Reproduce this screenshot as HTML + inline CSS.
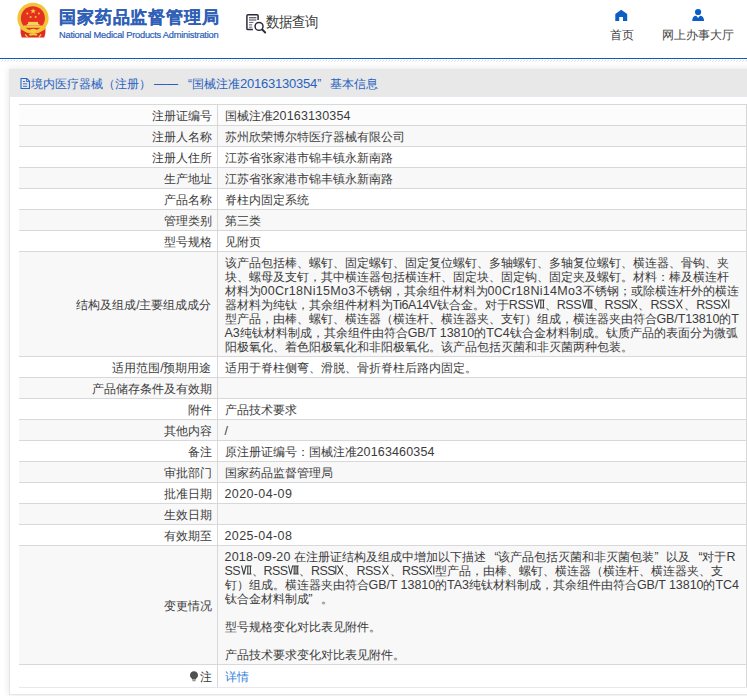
<!DOCTYPE html>
<html><head><meta charset="utf-8">
<style>
*{margin:0;padding:0;box-sizing:border-box}
html,body{width:747px;height:696px;overflow:hidden;background:#fff}
body{font-family:"Liberation Sans",sans-serif;color:#333;position:relative}
i{font-style:normal}
.hdr{position:absolute;left:0;top:0;width:747px;height:58px}
.emb{position:absolute;left:0;top:0}
.t1{position:absolute;left:59px;top:6px;font-size:16.5px;font-weight:bold;color:#2f5fb6;line-height:22px;white-space:nowrap;letter-spacing:0.85px;-webkit-text-stroke:0.2px #2f5fb6}
.t2{position:absolute;left:59px;top:30px;font-size:9.3px;color:#2a5db8;line-height:11px;white-space:nowrap;letter-spacing:-0.24px;-webkit-text-stroke:0.2px #2c5cb4}
.sq{position:absolute;left:242px;top:10px}
.sqt{position:absolute;left:266px;top:14px;font-size:13px;color:#3a3a3a;line-height:18px;white-space:nowrap;transform:scaleY(1.12);transform-origin:0 50%}
.nav{position:absolute;top:0;color:#444;font-size:12px;line-height:14px;text-align:center;white-space:nowrap}
.bl{position:absolute;left:0;top:58px;width:747px;height:1px;background:#0c5bc0}
.hatch{position:absolute;left:0;top:59px;width:747px;height:3px;background:repeating-linear-gradient(90deg,#fff 0 1px,#dedede 1px 2px,#fff 2px 3px)}
.panel{position:absolute;left:9px;top:69px;width:760px;height:626px;background:#fff;border:1px solid #e6e6e6;border-top:0;box-shadow:0 0 7px rgba(0,0,0,.11)}
.ph{position:absolute;left:-1px;top:0;width:100%;height:28px;background:#e8e8e8;border-bottom:1px solid #e3eaf2}
.pht{position:absolute;left:22px;top:7px;font-size:12px;line-height:16px;color:#2762c0;white-space:nowrap}
.pht svg.di{position:absolute;left:-11px;top:1px}
.pht .e{font-size:13px;letter-spacing:-0.22px}
table{position:absolute;left:9px;top:35px;width:728px;border-collapse:collapse;table-layout:fixed;font-size:12px;line-height:14px;color:#3c3c3c}
td{border-top:1px solid #d8d8d8;padding:4px 6px 2px 7px;vertical-align:middle}
td.l{width:198px;text-align:right;padding-right:5px;border-right:1px solid #d8d8d8}
td.v{border-right:1px solid #d8d8d8;white-space:nowrap}
tr.g td{background:#f8f8f8}
tr.f td{background:#fcfcfc}
tr.last td{border-bottom:1px solid #e6e8f0;padding-top:5px;padding-bottom:3px}
.e{font-size:12.5px;line-height:12px}
.v .e{letter-spacing:.15px}
.ln .e{letter-spacing:var(--ls)}
.v .dt{letter-spacing:.38px}

.q1,.q2{display:inline-block;width:12px}
.q1{text-align:right}
.bulb{vertical-align:-1px;margin-right:1px}
a{color:#2f7ee0;text-decoration:none}

.rn{vertical-align:0;margin:0 0 0 0.5px}

</style></head><body>
<div class="hdr">
  <svg class="emb" width="60" height="42" viewBox="0 0 60 42">
    <path d="M20.6 27.5 Q20 33 21.8 37.6 L44.2 37.6 Q46 33 45.4 27.5 Z" fill="#de2b1e"/>
    <circle cx="33" cy="18.3" r="15.6" fill="#f2c43a"/>
    <circle cx="32.9" cy="18.2" r="12" fill="#e52f20"/>
    <path d="M33.1 8.2 l.75 1.95 2.1 .05 -1.65 1.3 .6 2 -1.8 -1.15 -1.8 1.15 .6 -2 -1.65 -1.3 2.1 -.05z" fill="#f6d23e"/>
    <circle cx="27.3" cy="13.5" r="1.05" fill="#f2c838"/><circle cx="38.9" cy="13.5" r="1.05" fill="#f2c838"/>
    <circle cx="30.6" cy="17" r="1.05" fill="#f2c838"/><circle cx="35.6" cy="17" r="1.05" fill="#f2c838"/>
    <rect x="28.1" y="21.9" width="10" height="2.2" fill="#f6d456"/>
    <rect x="26.8" y="24.1" width="12.6" height="1.4" fill="#f7dc80"/>
    <rect x="23.7" y="25.5" width="18.5" height="2.3" fill="#f3cb3c"/>
    <path d="M21.5 28.5 Q33 35.5 44.5 28.5" fill="none" stroke="#f2c43a" stroke-width="2.2"/>
    <ellipse cx="33.2" cy="30.6" rx="3.2" ry="1.9" fill="#f3cf45"/>
    <path d="M29 34.2 Q33.2 32.6 37.4 34.2 L36.8 35.8 Q33.2 34.6 29.6 35.8 Z" fill="#f3cf45"/>
    <path d="M25.2 34.3 L27.6 37.4 M41.2 34.3 L38.8 37.4" stroke="#f3d04a" stroke-width="1.3"/>
  </svg>
  <div class="t1">国家药品监督管理局</div>
  <div class="t2">National Medical Products Administration</div>
  <svg class="sq" width="28" height="26" viewBox="242 10 28 26">
    <path d="M252.9 29.6 H248 Q246.9 29.6 246.9 28.5 V15.8 Q246.9 14.7 248 14.7 H257 Q258.1 14.7 258.1 15.8 V19.9" fill="none" stroke="#2b2b3b" stroke-width="1.5"/>
    <rect x="249" y="17.5" width="7.3" height="2.6" fill="#c8c8cc"/>
    <path d="M249 17.5 H256.3 M249 20.1 H256.3 M249 22.4 H253.5 M249 24.6 H252.2 M249 27.4 H252.2" stroke="#55555f" stroke-width="0.9"/>
    <rect x="249" y="24.6" width="3.2" height="2.8" fill="#c8c8cc"/>
    <circle cx="259.05" cy="26.4" r="3.95" fill="#fff" stroke="#2b2b3b" stroke-width="1.5"/>
    <path d="M262.2 29.5 L265.2 32.5" stroke="#2b2b3b" stroke-width="1.9" stroke-linecap="round"/>
  </svg>
  <div class="sqt">数据查询</div>
  <svg style="position:absolute;left:0;top:0" width="747" height="58" viewBox="0 0 747 58"><path d="M621.2 9.7 L627.2 14 V21 H623 V16.9 H619.2 V21 H615.3 V14 Z" fill="#0b5ec4"/><circle cx="698.1" cy="12" r="3.1" fill="#0b5ec4"/><path d="M692.2 21 C692.2 17.6 693.9 15.7 696.2 15.7 L698.1 18 L700 15.7 C702.3 15.7 704.1 17.6 704.1 21 Z" fill="#0b5ec4"/></svg>
  <div class="nav" style="left:609px;top:28px;width:25px">首页</div>
  
  <div class="nav" style="left:661px;top:28px;width:73px">网上办事大厅</div>
  
</div>
<div class="bl"></div>
<svg style="position:absolute;left:0;top:59px" width="747" height="3"><defs><pattern id="hp" width="3" height="3" patternUnits="userSpaceOnUse"><rect x="2" y="1" width="1" height="1" fill="#d9d9d9"/><rect x="1" y="2" width="1" height="1" fill="#e6e6e6"/></pattern></defs><rect width="747" height="3" fill="url(#hp)"/></svg>
<div class="panel">
  <div class="ph"><div class="pht"><svg class="di" width="11" height="13" viewBox="20 77 11 13"><path d="M21 78.5 H26.8 L29.5 81.2 V88.5 H21 Z" fill="none" stroke="#2a66c8" stroke-width="1.1"/><path d="M26.5 78.5 V81.5 H29.5" fill="none" stroke="#2a66c8" stroke-width="0.9"/><path d="M23 81.5 H25 M23 83.8 H27.2 M23 86.3 H27.2" stroke="#2a66c8" stroke-width="0.9"/></svg>境内医疗器械（注册）<span style="margin-left:3px">——</span><i class="q1" style="width:14px">“</i>国械注准<span class="e">20163130354</span><i class="q2" style="width:13px">”</i>基本信息</div></div>
  <table>
<tr class="f"><td class="l">注册证编号</td><td class="v">国械注准<span class="e">20163130354</span></td></tr>
<tr class="g"><td class="l">注册人名称</td><td class="v">苏州欣荣博尔特医疗器械有限公司</td></tr>
<tr class=""><td class="l">注册人住所</td><td class="v">江苏省张家港市锦丰镇永新南路</td></tr>
<tr class="g"><td class="l">生产地址</td><td class="v">江苏省张家港市锦丰镇永新南路</td></tr>
<tr class=""><td class="l">产品名称</td><td class="v">脊柱内固定系统</td></tr>
<tr class="g"><td class="l">管理类别</td><td class="v">第三类</td></tr>
<tr class=""><td class="l">型号规格</td><td class="v">见附页</td></tr>
<tr class="g"><td class="l">结构及组成/主要组成成分</td><td class="v"><span class="ln" style="--ls:0px">该产品包括棒、螺钉、固定螺钉、固定复位螺钉、多轴螺钉、多轴复位螺钉、横连器、骨钩、夹</span><br><span class="ln" style="--ls:0px">块、螺母及支钉，其中横连器包括横连杆、固定块、固定钩、固定夹及螺钉。材料：棒及横连杆</span><br><span class="ln" style="--ls:0.308px">材料为<span class="e">00Cr18Ni15Mo3</span>不锈钢，其余组件材料为<span class="e">00Cr18Ni14Mo3</span>不锈钢；或除横连杆外的横连</span><br><span class="ln" style="--ls:-0.45px">器材料为纯钛，其余组件材料为<span class="e">Ti6A14V</span>钛合金。对于<span class="e">RSS</span><svg class="rn" width="11" height="10" viewBox="0 -0.5 11 10"><path d="M0.5 0 L2.8 9 L5.1 0 M5.7 0.5 H10.5 M5.7 8.5 H10.5 M6.8 0.5 V8.5 M9.4 0.5 V8.5" stroke="#3c3c3c" stroke-width="1.1" fill="none"/></svg>、<span class="e">RSS</span><svg class="rn" width="11" height="10" viewBox="0 -0.5 11 10"><path d="M0.5 0 L2.6 9 L4.7 0 M5.2 0.5 H10.7 M5.2 8.5 H10.7 M6.2 0.5 V8.5 M8 0.5 V8.5 M9.7 0.5 V8.5" stroke="#3c3c3c" stroke-width="1.1" fill="none"/></svg>、<span class="e">RSS</span><svg class="rn" width="9" height="10" viewBox="0 -0.5 9 10"><path d="M0.8 0 V9 M2.4 0 L8 9 M8 0 L2.4 9" stroke="#3c3c3c" stroke-width="1.1" fill="none"/></svg>、<span class="e">RSS</span><svg class="rn" width="9" height="10" viewBox="0 -0.5 9 10"><path d="M1.5 0 L7.3 9 M7.3 0 L1.5 9" stroke="#3c3c3c" stroke-width="1.1" fill="none"/></svg>、<span class="e">RSS</span><svg class="rn" width="9" height="10" viewBox="0 -0.5 9 10"><path d="M0.5 0 L5.9 9 M5.9 0 L0.5 9 M7.8 0 V9" stroke="#3c3c3c" stroke-width="1.1" fill="none"/></svg></span><br><span class="ln" style="--ls:-0.135px">型产品，由棒、螺钉、横连器（横连杆、横连器夹、支钉）组成，横连器夹由符合<span class="e">GB/T13810</span>的<span class="e">T</span></span><br><span class="ln" style="--ls:-0.06px"><span class="e">A3</span>纯钛材料制成，其余组件由符合<span class="e">GB/T 13810</span>的<span class="e">TC4</span>钛合金材料制成。钛质产品的表面分为微弧</span><br><span class="ln" style="--ls:0px">阳极氧化、着色阳极氧化和非阳极氧化。该产品包括灭菌和非灭菌两种包装。</span></td></tr>
<tr class=""><td class="l">适用范围/预期用途</td><td class="v">适用于脊柱侧弯、滑脱、骨折脊柱后路内固定。</td></tr>
<tr class="g"><td class="l">产品储存条件及有效期</td><td class="v"></td></tr>
<tr class=""><td class="l">附件</td><td class="v">产品技术要求</td></tr>
<tr class="g"><td class="l">其他内容</td><td class="v"><span class="e">/</span></td></tr>
<tr class=""><td class="l">备注</td><td class="v">原注册证编号：国械注准<span class="e">20163460354</span></td></tr>
<tr class="g"><td class="l">审批部门</td><td class="v">国家药品监督管理局</td></tr>
<tr class=""><td class="l">批准日期</td><td class="v"><span class="e dt">2020-04-09</span></td></tr>
<tr class="g"><td class="l">生效日期</td><td class="v"></td></tr>
<tr class=""><td class="l">有效期至</td><td class="v"><span class="e dt">2025-04-08</span></td></tr>
<tr class="g"><td class="l">变更情况</td><td class="v"><span class="ln" style="--ls:0.225px"><span class="e">2018-09-20 </span>在注册证结构及组成中增加以下描述<i class="q1">“</i>该产品包括灭菌和非灭菌包装<i class="q2">”</i>以及<i class="q1">“</i>对于<span class="e">R</span></span><br><span class="ln" style="--ls:-0.579px"><span class="e">SS</span><svg class="rn" width="11" height="10" viewBox="0 -0.5 11 10"><path d="M0.5 0 L2.8 9 L5.1 0 M5.7 0.5 H10.5 M5.7 8.5 H10.5 M6.8 0.5 V8.5 M9.4 0.5 V8.5" stroke="#3c3c3c" stroke-width="1.1" fill="none"/></svg>、<span class="e">RSS</span><svg class="rn" width="11" height="10" viewBox="0 -0.5 11 10"><path d="M0.5 0 L2.6 9 L4.7 0 M5.2 0.5 H10.7 M5.2 8.5 H10.7 M6.2 0.5 V8.5 M8 0.5 V8.5 M9.7 0.5 V8.5" stroke="#3c3c3c" stroke-width="1.1" fill="none"/></svg>、<span class="e">RSS</span><svg class="rn" width="9" height="10" viewBox="0 -0.5 9 10"><path d="M0.8 0 V9 M2.4 0 L8 9 M8 0 L2.4 9" stroke="#3c3c3c" stroke-width="1.1" fill="none"/></svg>、<span class="e">RSS</span><svg class="rn" width="9" height="10" viewBox="0 -0.5 9 10"><path d="M1.5 0 L7.3 9 M7.3 0 L1.5 9" stroke="#3c3c3c" stroke-width="1.1" fill="none"/></svg>、<span class="e">RSS</span><svg class="rn" width="9" height="10" viewBox="0 -0.5 9 10"><path d="M0.5 0 L5.9 9 M5.9 0 L0.5 9 M7.8 0 V9" stroke="#3c3c3c" stroke-width="1.1" fill="none"/></svg>型产品，由棒、螺钉、横连器（横连杆、横连器夹、支</span><br><span class="ln" style="--ls:-0.062px">钉）组成。横连器夹由符合<span class="e">GB/T 13810</span>的<span class="e">TA3</span>纯钛材料制成，其余组件由符合<span class="e">GB/T 13810</span>的<span class="e">TC4</span></span><br><span class="ln" style="--ls:0px">钛合金材料制成<i class="q2">”</i>。</span><br><br><span class="ln" style="--ls:0px">型号规格变化对比表见附件。</span><br><br><span class="ln" style="--ls:0px">产品技术要求变化对比表见附件。</span></td></tr>
<tr class="last"><td class="l"><svg class="bulb" width="10" height="11" viewBox="0 0 10 11"><path d="M5 0.3 C7.6 0.3 9 2.2 9 4.2 C9 5.9 8 6.8 7.1 7.6 L6.9 8.5 L3.1 8.5 L2.9 7.6 C2 6.8 1 5.9 1 4.2 C1 2.2 2.4 0.3 5 0.3Z" fill="#505050"/><path d="M3.4 9.2h3.2v1h-3.2z" fill="#777"/></svg>注</td><td class="v"><a>详情</a></td></tr>
  </table>
</div>
</body></html>
